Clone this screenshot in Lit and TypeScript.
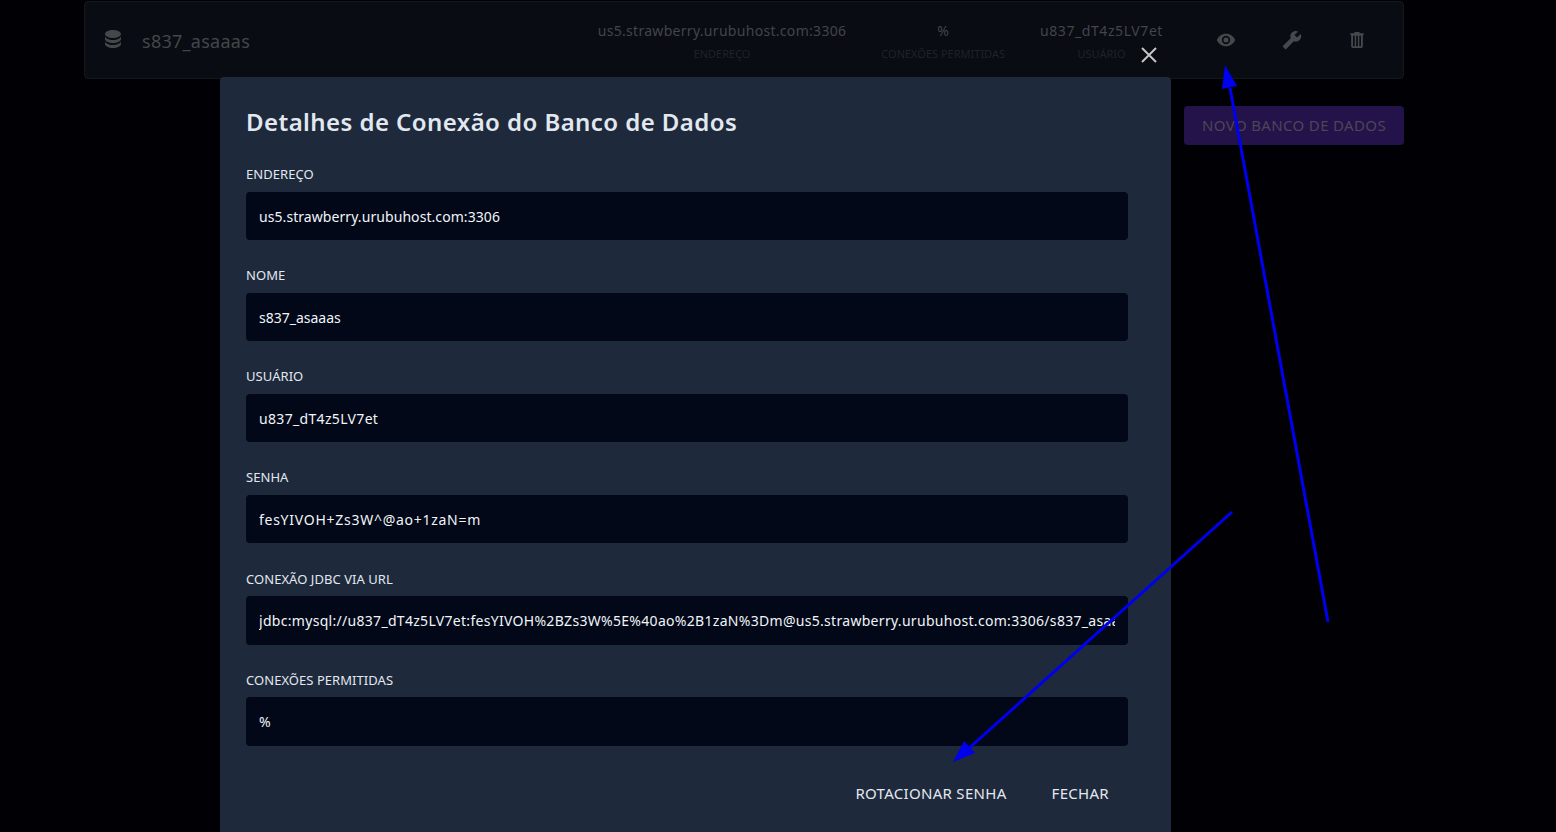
import { LitElement, html, css, svg } from "lit";
import { customElement } from "lit/decorators.js";

const FIELDS: [string, string, number][] = [
  ["ENDEREÇO", "us5.strawberry.urubuhost.com:3306", 0.07],
  ["NOME", "s837_asaaas", 0],
  ["USUÁRIO", "u837_dT4z5LV7et", 0.33],
  ["SENHA", "fesYIVOH+Zs3W^@ao+1zaN=m", 0.73],
  ["CONEXÃO JDBC VIA URL", "jdbc:mysql://u837_dT4z5LV7et:fesYIVOH%2BZs3W%5E%40ao%2B1zaN%3Dm@us5.strawberry.urubuhost.com:3306/s837_asaaas", 0.3],
  ["CONEXÕES PERMITIDAS", "%", 0.5],
];

const STATS: [string, string, number][] = [
  ["us5.strawberry.urubuhost.com:3306", "ENDEREÇO", 0.3],
  ["%", "CONEXÕES PERMITIDAS", 0.3],
  ["u837_dT4z5LV7et", "USUÁRIO", 0.58],
];

const icon = (d: string, cls = "") =>
  html`<svg class="ic ${cls}" viewBox="0 0 24 24" fill="currentColor"><path d=${d}></path></svg>`;

const DB = "M12,3C7.58,3 4,4.79 4,7C4,9.21 7.58,11 12,11C16.42,11 20,9.21 20,7C20,4.79 16.42,3 12,3M4,9V12C4,14.21 7.58,16 12,16C16.42,16 20,14.21 20,12V9C20,11.21 16.42,13 12,13C7.58,13 4,11.21 4,9M4,14V17C4,19.21 7.58,21 12,21C16.42,21 20,19.21 20,17V14C20,16.21 16.42,18 12,18C7.58,18 4,16.21 4,14Z";
const EYE = "M12,9A3,3 0 0,0 9,12A3,3 0 0,0 12,15A3,3 0 0,0 15,12A3,3 0 0,0 12,9M12,17A5,5 0 0,1 7,12A5,5 0 0,1 12,7A5,5 0 0,1 17,12A5,5 0 0,1 12,17M12,4.5C7,4.5 2.73,7.61 1,12C2.73,16.39 7,19.5 12,19.5C17,19.5 21.27,16.39 23,12C21.27,7.61 17,4.5 12,4.5Z";
const WRENCH = "M22.7,19L13.6,9.9C14.5,7.6 14,4.9 12.1,3C10.1,1 7.1,0.6 4.7,1.7L9,6L6,9L1.6,4.7C0.4,7.1 0.9,10.1 2.9,12.1C4.8,14 7.5,14.5 9.8,13.6L18.9,22.7C19.3,23.1 19.9,23.1 20.3,22.7L22.6,20.4C23.1,20 23.1,19.3 22.7,19Z";
const TRASH = "M9,2.5V4H4V6H5V19.5A2,2 0 0,0 7,21.5H17A2,2 0 0,0 19,19.5V6H20V4H15V2.5H9M7.2,7H9.2V19.5H7.2V7M11,7H13V19.5H11V7M14.8,7H16.8V19.5H14.8V7Z";

@customElement("app-root")
export class AppRoot extends LitElement {
  static styles = css`
    :host {
      display: block;
      position: relative;
      height: 832px;
      overflow: hidden;
      background: #000005;
      font-family: "Noto Sans", "Open Sans", sans-serif;
    }
    .page {
      display: flex;
      flex-direction: column;
      align-items: flex-end;
      gap: 27px;
      width: 1320px;
      margin-left: 84px;
      padding-top: 1px;
    }
    .row {
      box-sizing: border-box;
      width: 100%;
      height: 78px;
      display: flex;
      align-items: center;
      padding: 0 13px 0 16px;
      background: #090c12;
      border: 1px solid #14171c;
      border-radius: 4px;
    }
    .ic { display: block; width: 24px; height: 24px; }
    .db { color: #45484b; margin-top: -3px; }
    .name { margin-left: 17px; font-size: 18px; letter-spacing: 0.27px; color: #43474b; flex: 1; margin-top: 1px; }
    .stats { display: flex; gap: 35px; margin-right: 30.5px; margin-top: 2px; }
    .stat { display: flex; flex-direction: column; align-items: center; gap: 5px; }
    .val { font-size: 14px; line-height: 20px; color: #42454a; }
    .lab { font-size: 11px; line-height: 16px; color: #1e232a; }
    .acts { display: flex; margin-top: -1px; }
    .act { width: 65.5px; display: flex; justify-content: center; color: #45484c; }
    .act .ic { width: 20px; height: 20px; }
    .flip { transform: scaleX(-1); }
    .new {
      width: 220px;
      height: 39px;
      box-sizing: border-box;
      padding-bottom: 2px;
      display: flex;
      align-items: center;
      justify-content: center;
      background: #24134a;
      border-radius: 4px;
      color: #4b4656;
      font-size: 15px;
      letter-spacing: 0.35px;
    }
    .backdrop { position: absolute; inset: 0; }
    .modal {
      position: absolute;
      left: 220px;
      top: 77px;
      width: 951px;
      height: 800px;
      box-sizing: border-box;
      background: #1e293b;
      border-radius: 4px;
      padding: 26px 43px 0 26px;
      color: #e2e8f0;
    }
    h2 {
      margin: 0 0 24.3px;
      font-size: 24px;
      line-height: 38px;
      font-weight: 600;
      letter-spacing: 0.43px;
      color: #e2e8f0;
    }
    .fields { display: flex; flex-direction: column; gap: 26.08px; }
    .field { display: flex; flex-direction: column; gap: 8.7px; }
    .flabel { font-size: 13px; line-height: 18px; color: #e2e8f0; letter-spacing: 0.05px; }
    .input {
      box-sizing: border-box;
      height: 48.3px;
      background: #020817;
      border-radius: 4px;
      padding: 0 13px;
      display: flex;
      align-items: center;
      font-size: 14px;
      color: #f1f5f9;
    }
    .input span { overflow: hidden; white-space: nowrap; min-width: 0; }
    .btns { display: flex; justify-content: flex-end; margin-top: 26px; }
    .btn { font-size: 15px; line-height: 42px; padding: 0 19px 0 26px; color: #e2e8f0; letter-spacing: 0.3px; }
    .close { position: absolute; left: 1139px; top: 45px; width: 20px; height: 20px; color: #c4c4c6; }
    .arrows { position: absolute; inset: 0; width: 1556px; height: 832px; pointer-events: none; }
  `;

  render() {
    return html`
      <div class="page">
        <div class="row">
          ${icon(DB, "db")}
          <div class="name">s837_asaaas</div>
          <div class="stats">
            ${STATS.map(([v, l, s]) => html`<div class="stat"><div class="val" style="letter-spacing:${s}px">${v}</div><div class="lab">${l}</div></div>`)}
          </div>
          <div class="acts">
            <div class="act">${icon(EYE)}</div>
            <div class="act">${icon(WRENCH, "flip")}</div>
            <div class="act">${icon(TRASH)}</div>
          </div>
        </div>
        <div class="new">NOVO BANCO DE DADOS</div>
      </div>
      <div class="backdrop">
        <div class="modal">
          <h2>Detalhes de Conexão do Banco de Dados</h2>
          <div class="fields">
            ${FIELDS.map(([l, v, s]) => html`<div class="field"><div class="flabel">${l}</div><div class="input"><span style="letter-spacing:${s}px">${v}</span></div></div>`)}
          </div>
          <div class="btns">
            <div class="btn">ROTACIONAR SENHA</div>
            <div class="btn">FECHAR</div>
          </div>
        </div>
        <svg class="close" viewBox="0 0 20 20" fill="none" stroke="currentColor" stroke-width="2">
          <path d="M3 3L17 17M17 3L3 17"></path>
        </svg>
      </div>
      <svg class="arrows" viewBox="0 0 1556 832">
        ${svg`
          <path d="M1328 622L1230 88" stroke="#0000f0" stroke-width="3" fill="none"></path>
          <path d="M1225 65L1237 86L1222 89Z" fill="#0000f0"></path>
          <path d="M1232 512L967 750" stroke="#0000f0" stroke-width="3" fill="none"></path>
          <path d="M953 762L964 741L975 753Z" fill="#0000f0"></path>
        `}
      </svg>
    `;
  }
}
